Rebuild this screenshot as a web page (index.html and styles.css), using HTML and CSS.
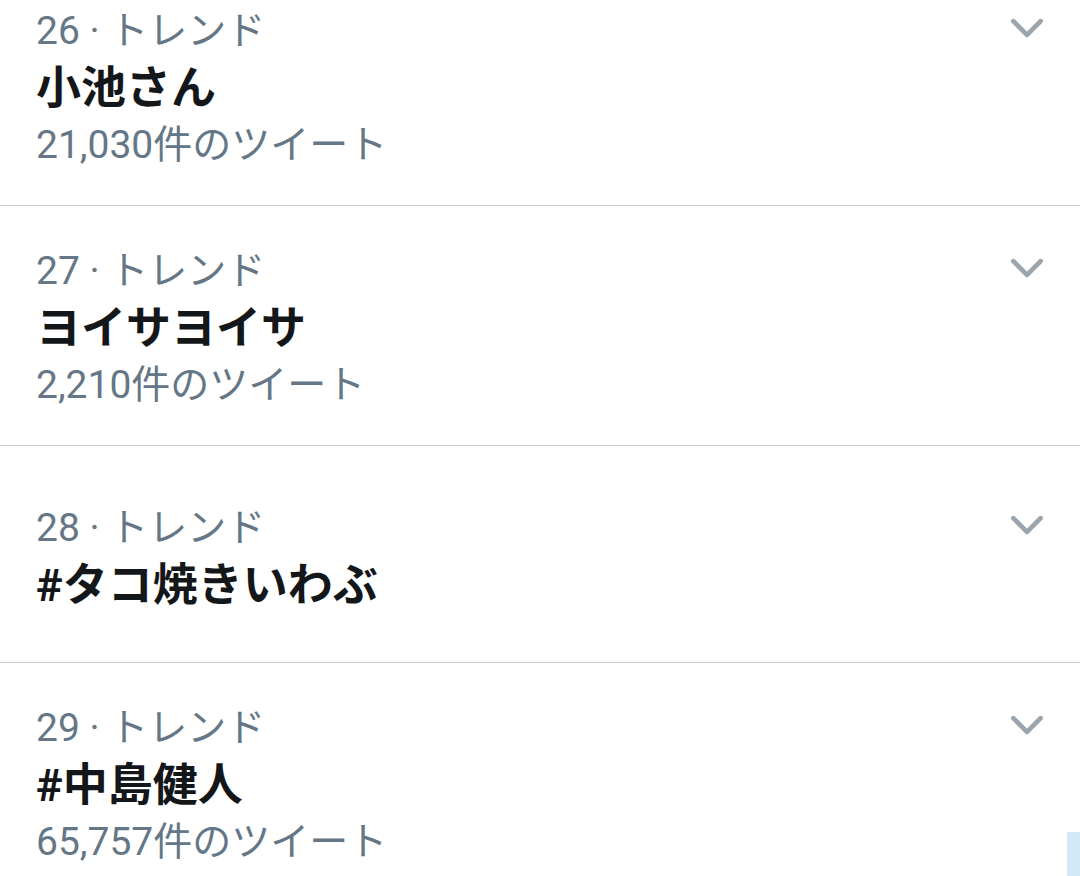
FILE: index.html
```html
<!DOCTYPE html>
<html lang="ja">
<head>
    <meta charset="UTF-8">
    <meta name="viewport" content="width=device-width, initial-scale=1.0">
    <title>トレンド</title>
    <link rel="stylesheet" href="styles.css">
</head>
<body>
    <ul class="lista-trends">
        <li class="trend">
            <div class="trend-topo">
                <span class="trend-rotulo">26 · トレンド</span>
                <svg class="seta" viewBox="0 0 32 20"><path d="M3 3 L16 16 L29 3"/></svg>
            </div>
            <div class="trend-nome">小池さん</div>
            <div class="trend-contagem">21,030件のツイート</div>
        </li>
        <li class="trend">
            <div class="trend-topo">
                <span class="trend-rotulo">27 · トレンド</span>
                <svg class="seta" viewBox="0 0 32 20"><path d="M3 3 L16 16 L29 3"/></svg>
            </div>
            <div class="trend-nome">ヨイサヨイサ</div>
            <div class="trend-contagem">2,210件のツイート</div>
        </li>
        <li class="trend">
            <div class="trend-topo">
                <span class="trend-rotulo">28 · トレンド</span>
                <svg class="seta" viewBox="0 0 32 20"><path d="M3 3 L16 16 L29 3"/></svg>
            </div>
            <div class="trend-nome">#タコ焼きいわぶ</div>
        </li>
        <li class="trend">
            <div class="trend-topo">
                <span class="trend-rotulo">29 · トレンド</span>
                <svg class="seta" viewBox="0 0 32 20"><path d="M3 3 L16 16 L29 3"/></svg>
            </div>
            <div class="trend-nome">#中島健人</div>
            <div class="trend-contagem">65,757件のツイート</div>
        </li>
    </ul>
    <div class="botao-flutuante"></div>
</body>
</html>
```

FILE: styles.css
```css
* {
    margin: 0;
    padding: 0;
    box-sizing: border-box;
}
body {
    background-color: #ffffff;
    font-family: Roboto, "Noto Sans CJK JP", sans-serif;
    overflow: hidden;
    height: 876px;
    position: relative;
}
.lista-trends {
    list-style: none;
    margin-top: -34px;
}
.trend {
    min-height: 217px;
    padding: 37px 36px 31px 36px;
    border-bottom: 1px solid #cccccc;
    display: flex;
    flex-direction: column;
    justify-content: center;
}
.trend-topo {
    display: flex;
    justify-content: space-between;
    align-items: center;
}
.trend-rotulo,
.trend-contagem {
    font-size: 39px;
    line-height: 57px;
    color: #657786;
}
.trend-nome {
    font-size: 45px;
    line-height: 57px;
    font-weight: bold;
    color: #14171a;
}
.seta {
    width: 34px;
    height: 21px;
    margin-top: -6px;
    fill: none;
    stroke: #9aa5ae;
    stroke-width: 4.5;
    stroke-linecap: round;
    stroke-linejoin: round;
}
.botao-flutuante {
    position: absolute;
    right: 0;
    bottom: 0;
    width: 13px;
    height: 44px;
    background-color: #d0e8f8;
}
```
